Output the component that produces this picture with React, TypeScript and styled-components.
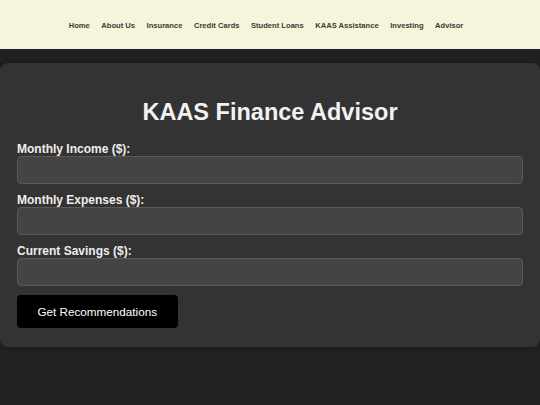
import styled, { createGlobalStyle } from 'styled-components'

const GlobalStyle = createGlobalStyle`
	html, body {
		margin: 0;
		padding: 0;
		background: #222;
		font-family: "Liberation Sans", Arial, sans-serif;
	}
`

const links = ['Home', 'About Us', 'Insurance', 'Credit Cards', 'Student Loans', 'KAAS Assistance', 'Investing', 'Advisor']

const fields = ['Monthly Income ($):', 'Monthly Expenses ($):', 'Current Savings ($):']

export default function App () {
	return <>
		<GlobalStyle />
		<Header>
			<Nav>
				{links.map(link => <NavLink key={link} href="#">{link}</NavLink>)}
			</Nav>
		</Header>
		<Card>
			<Title>KAAS Finance Advisor</Title>
			<Form onSubmit={e => e.preventDefault()}>
				{fields.map(field => <Field key={field}>
					<Label>{field}</Label>
					<Input type="number" />
				</Field>)}
				<Button type="submit">Get Recommendations</Button>
			</Form>
		</Card>
	</>
}

const Header = styled.header`
	height: 49px;
	background: #f5f5dc;
	display: flex;
	align-items: center;
	justify-content: center;
`

const Nav = styled.nav`
	display: flex;
	flex-direction: row;
	gap: 11.5px;
	padding-right: 8px;
	margin-top: 1px;
`

const NavLink = styled.a`
	font-size: 7.6px;
	font-weight: 700;
	color: #3a3a3a;
	text-decoration: none;
`

const Card = styled.main`
	margin: 14px 0;
	padding: 16px 17px 19px;
	background: #333;
	border-radius: 8px;
	box-shadow: 0 0 12px rgba(0, 0, 0, 0.35);
`

const Title = styled.h1`
	margin: 20px 0 16px;
	text-align: center;
	font-size: 23.5px;
	font-weight: 700;
	color: #f2f2f2;
`

const Form = styled.form`
	display: flex;
	flex-direction: column;
	align-items: flex-start;
	gap: 9px;
`

const Field = styled.div`
	display: flex;
	flex-direction: column;
	align-self: stretch;
`

const Label = styled.label`
	font-size: 12px;
	font-weight: 700;
	line-height: 14px;
	color: #eee;
`

const Input = styled.input`
	box-sizing: border-box;
	height: 28px;
	width: 100%;
	margin: 0;
	background: #444;
	border: 1px solid #5a5a5a;
	border-radius: 4px;
	color: #eee;
	outline: none;
`

const Button = styled.button`
	height: 33px;
	padding: 0 20.5px;
	background: #000;
	color: #fff;
	border: none;
	border-radius: 4px;
	font-family: "Liberation Sans", Arial, sans-serif;
	font-size: 11.7px;
	cursor: pointer;
`
